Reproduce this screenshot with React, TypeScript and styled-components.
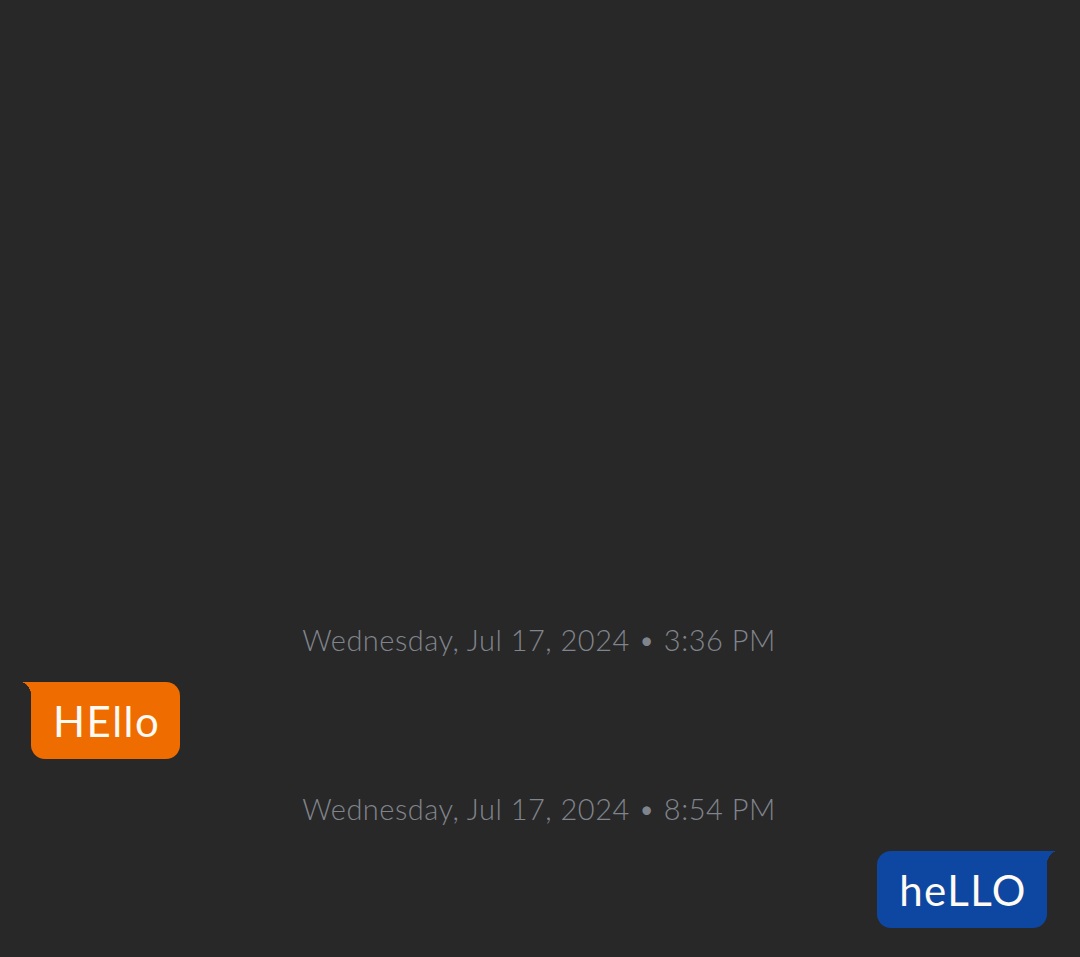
import React from "react";
import styled, { createGlobalStyle, css } from "styled-components";

const Global = createGlobalStyle`
  html, body { margin: 0; padding: 0; background: #282828; }
  body { font-family: Lato, "Noto Sans", sans-serif; }
`;

const Page = styled.div`
  min-height: 957px;
  box-sizing: border-box;
  display: flex;
  flex-direction: column;
  justify-content: flex-end;
  padding: 0 33px 29px 31px;
  background: #282828;
`;

const Stamp = styled.div`
  text-align: center;
  color: #80848c;
  font-size: 29px;
  font-weight: 300;
  line-height: 34px;
  letter-spacing: 0.5px;
  margin-bottom: 25px;
`;

const Row = styled.div<{ $mine?: boolean }>`
  display: flex;
  justify-content: ${(p) => (p.$mine ? "flex-end" : "flex-start")};
  margin-bottom: ${(p) => (p.$mine ? "0" : "33px")};
`;

const Bubble = styled.div<{ $mine?: boolean }>`
  position: relative;
  height: 77px;
  display: flex;
  align-items: center;
  padding: 0 20px 0 22px;
  color: #fffaf2;
  font-size: 42px;
  font-weight: 400;
  letter-spacing: 1.5px;
  background: ${(p) => (p.$mine ? "#0d47a1" : "#ef6c00")};
  border-radius: ${(p) => (p.$mine ? "14px 0 14px 14px" : "0 14px 14px 14px")};

  &::before {
    content: "";
    position: absolute;
    top: 0;
    width: 11px;
    height: 18px;
    ${(p) =>
      p.$mine
        ? css`
            right: -10px;
            background: radial-gradient(ellipse 11px 18px at 100% 100%, transparent 98%, #0d47a1 100%);
            border-top-right-radius: 2px;
          `
        : css`
            left: -10px;
            background: radial-gradient(ellipse 11px 18px at 0 100%, transparent 98%, #ef6c00 100%);
            border-top-left-radius: 2px;
          `}
  }
`;

export default function App() {
  return (
    <>
      <Global />
      <Page>
        <Stamp>Wednesday, Jul 17, 2024 • 3:36 PM</Stamp>
        <Row>
          <Bubble>HEllo</Bubble>
        </Row>
        <Stamp>Wednesday, Jul 17, 2024 • 8:54 PM</Stamp>
        <Row $mine>
          <Bubble $mine>heLLO</Bubble>
        </Row>
      </Page>
    </>
  );
}
